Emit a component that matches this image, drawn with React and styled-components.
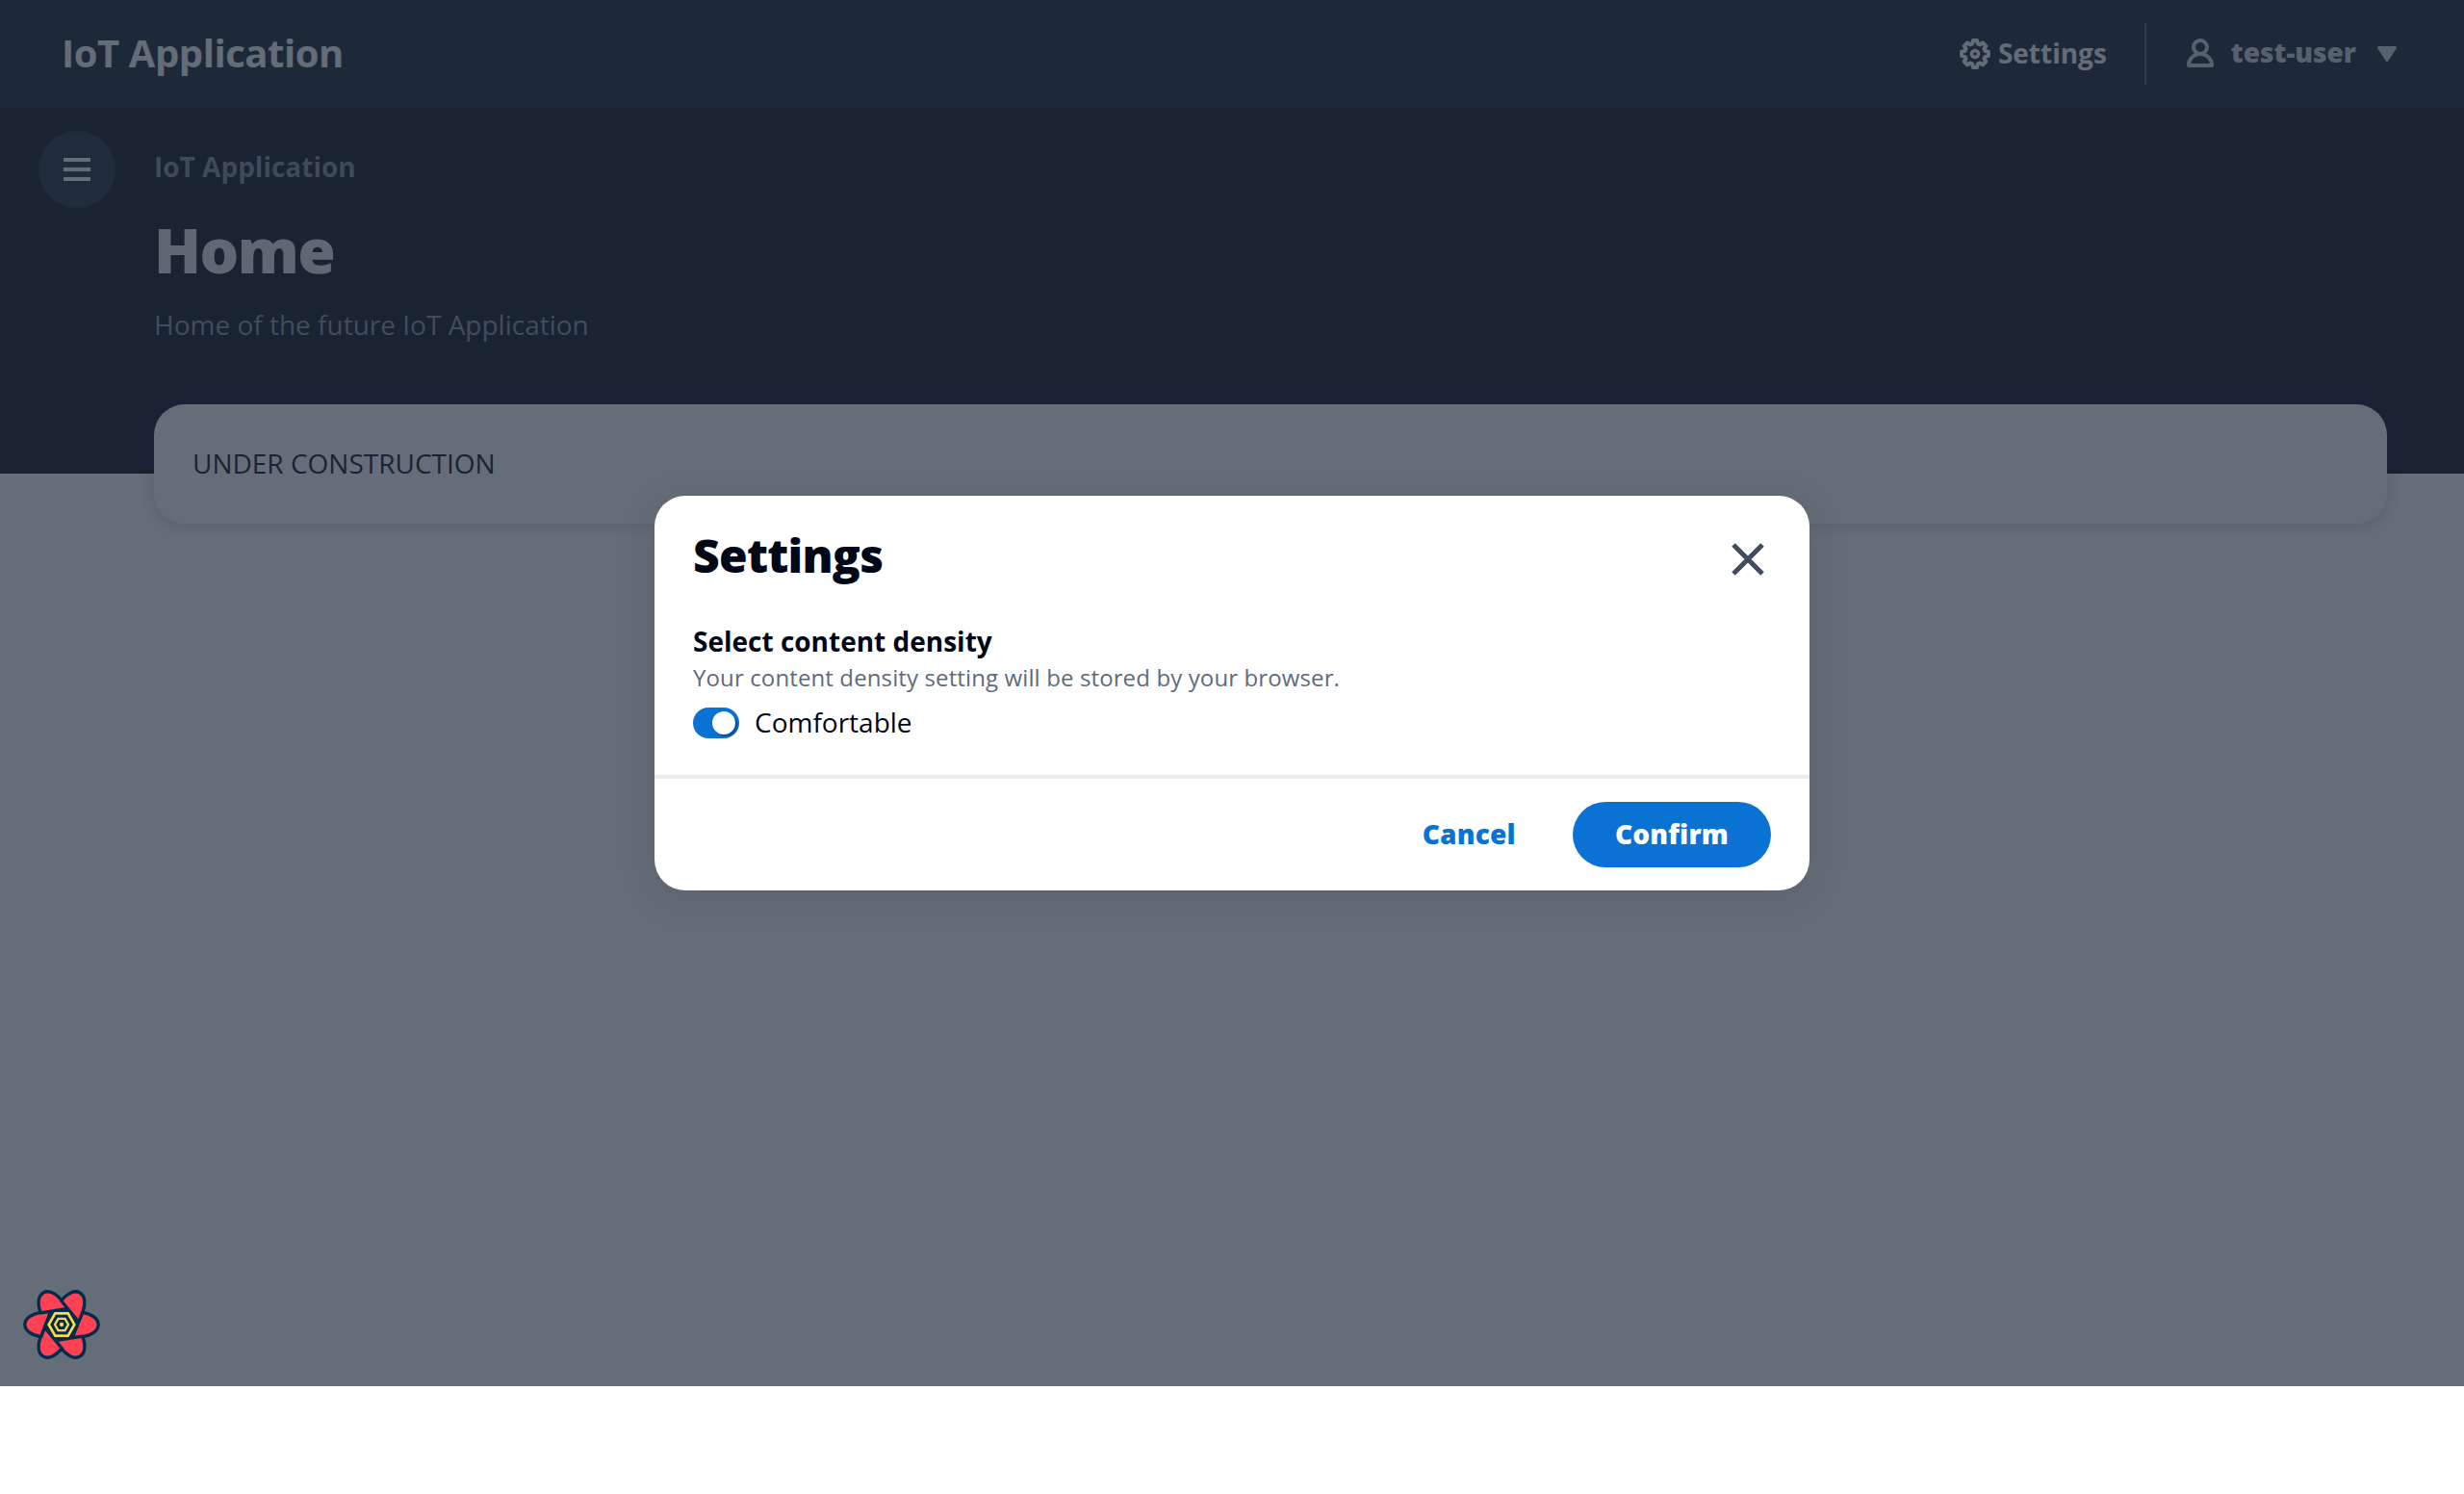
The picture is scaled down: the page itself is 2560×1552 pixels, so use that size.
import React from "react";
import styled, { createGlobalStyle } from "styled-components";

const GlobalStyle = createGlobalStyle`
  * { box-sizing: border-box; }
  body {
    margin: 0;
    background: #ffffff;
    color: #000716;
    font-family: "Open Sans", "Noto Sans", sans-serif;
    font-size: 28px;
    line-height: 40px;
  }
  h1, h2, p { margin: 0; }
  button { font: inherit; border: 0; background: none; padding: 0; cursor: pointer; }
`;

const Page = styled.div`
  position: relative;
  height: 1440px;
  background: #ffffff;
`;

const TopBar = styled.header`
  display: flex;
  align-items: center;
  justify-content: space-between;
  height: 112px;
  padding: 0 69px 0 64px;
  background: #0f1b2a;
`;

const Brand = styled.span`
  padding-bottom: 3px;
  font-size: 40px;
  line-height: 48px;
  font-weight: 700;
  letter-spacing: -0.45px;
  color: #fbfbfb;
`;

const Utilities = styled.nav`
  display: flex;
  align-items: center;
  height: 64px;
`;

const Utility = styled.button`
  display: flex;
  align-items: center;
  gap: ${(p) => p.$gap}px;
  font-weight: ${(p) => p.$weight};
  color: ${(p) => p.$color};
  svg { display: block; }
`;

const UtilityLabel = styled.span`
  padding-bottom: ${(p) => p.$lift}px;
`;

const UtilityDivider = styled.span`
  width: 2px;
  height: 64px;
  margin: 0 40px 0 39px;
  background: #414d5c;
`;

const Caret = styled.svg`
  margin-left: 5px;
`;

const Hero = styled.section`
  display: flex;
  align-items: flex-start;
  height: 380px;
  padding: 24px 80px 0 40px;
  background: #000716;
`;

const MenuButton = styled.button`
  display: flex;
  flex-direction: column;
  align-items: center;
  justify-content: center;
  gap: 6px;
  width: 80px;
  height: 80px;
  margin-right: 40px;
  border-radius: 50%;
  background: #192534;
`;

const MenuBar = styled.span`
  width: 28px;
  height: 4px;
  background: #fbfbfb;
`;

const HeroText = styled.div`
  display: flex;
  flex-direction: column;
  padding-top: 17px;
`;

const Breadcrumb = styled.span`
  font-weight: 700;
  color: #7d8998;
`;

const PageTitle = styled.h1`
  margin-top: 27px;
  font-size: 64px;
  line-height: 80px;
  font-weight: 800;
  letter-spacing: -1.5px;
  color: #e9ebed;
`;

const PageDescription = styled.p`
  margin-top: 17px;
  color: #8793a2;
`;

const Card = styled.section`
  position: relative;
  display: flex;
  align-items: center;
  height: 124px;
  margin: -72px 80px 0 160px;
  padding: 0 40px 2px;
  border-radius: 32px;
  background: #ffffff;
  box-shadow: 0 2px 16px 4px rgba(0, 7, 22, 0.12);
`;

const Backdrop = styled.div`
  position: absolute;
  inset: 0;
  display: flex;
  align-items: center;
  justify-content: center;
  background: rgba(35, 47, 62, 0.7);
`;

const Dialog = styled.div`
  display: flex;
  flex-direction: column;
  width: 1200px;
  height: 410px;
  border-radius: 32px;
  background: #ffffff;
  box-shadow: 0 8px 40px 2px rgba(0, 7, 22, 0.1);
`;

const DialogHeader = styled.div`
  display: flex;
  align-items: flex-start;
  justify-content: space-between;
  padding: 32px 44px 0 40px;
`;

const DialogTitle = styled.h2`
  font-size: 48px;
  line-height: 60px;
  font-weight: 800;
  letter-spacing: -0.75px;
`;

const CloseButton = styled.button`
  display: flex;
  margin-top: 14px;
  svg { display: block; }
`;

const DialogBody = styled.div`
  flex: 1;
  padding: 39px 40px 0;
`;

const FieldLabel = styled.div`
  font-weight: 700;
`;

const FieldHint = styled.div`
  font-size: 24px;
  line-height: 36px;
  letter-spacing: 0.12px;
  color: #5f6b7a;
`;

const ToggleRow = styled.label`
  display: flex;
  align-items: center;
  gap: 16px;
  height: 40px;
  margin-top: 9px;
`;

const ToggleTrack = styled.span`
  display: flex;
  align-items: center;
  justify-content: flex-end;
  width: 48px;
  height: 32px;
  padding: 4px;
  border-radius: 16px;
  background: #0972d3;
`;

const ToggleKnob = styled.span`
  width: 24px;
  height: 24px;
  border-radius: 50%;
  background: #ffffff;
  box-shadow: 2px 2px 2px rgba(0, 7, 22, 0.35);
`;

const ToggleLabel = styled.span`
  padding-bottom: 2px;
`;

const DialogFooter = styled.div`
  display: flex;
  align-items: center;
  justify-content: flex-end;
  gap: 15px;
  height: 120px;
  padding: 0 40px;
  border-top: 4px solid #e9ebed;
`;

const Button = styled.button`
  height: 68px;
  padding: 0 44px 2px;
  border-radius: 40px;
  font-weight: 800;
  letter-spacing: 0.22px;
  color: ${(p) => (p.$primary ? "#ffffff" : "#0972d3")};
  background: ${(p) => (p.$primary ? "#0972d3" : "transparent")};
`;

const QueryBadge = styled.button`
  position: absolute;
  left: 24px;
  bottom: 24px;
  width: 80px;
  height: 80px;
  svg { display: block; }
`;

const GearIcon = () => (
  <svg width="32" height="32" viewBox="0 0 16 16" fill="none" stroke="currentColor" strokeWidth="1.950">
    <path
      strokeLinejoin="round"
      d="M6.9 1h2.2l.3 1.7 1.2.5 1.4-1 1.7 1.7-1 1.4.5 1.2 1.7.3v2.3l-1.7.3-.5 1.2 1 1.4-1.7 1.7-1.4-1-1.2.5-.3 1.8H6.9l-.3-1.8-1.2-.5-1.4 1L2.300 12l1-1.400-.5-1.200-1.800-.3V6.800l1.800-.3.5-1.200-1-1.400L4 2.200l1.400 1 1.200-.5z"
    />
    <circle cx="8" cy="8" r="1.750" strokeWidth="1.800" />
  </svg>
);

const UserIcon = () => (
  <svg width="32" height="32" viewBox="0 0 16 16" fill="none" stroke="currentColor" strokeWidth="2" strokeLinejoin="round">
    <circle cx="8" cy="4.500" r="3.500" />
    <path d="M8 8c-3.300 0-6 2.500-6 6h12c0-3.500-2.700-6-6-6z" />
  </svg>
);

const petals = [0, 60, 120, 180, 240, 300];

const hexagon = (r) =>
  petals
    .map((a) => {
      const t = (a * Math.PI) / 180;
      return `${(r * Math.cos(t)).toFixed(2)},${(r * Math.sin(t)).toFixed(2)}`;
    })
    .join(" ");

const QueryLogo = () => (
  <svg width="80" height="80" viewBox="-120 -120 240 240">
    <circle r="54" fill="#002c4b" />
    <g fill="#ff4154" stroke="#002c4b" strokeWidth="10" strokeLinejoin="round">
      {petals.map((a) => (
        <path key={a} transform={`rotate(${a})`} d="M64-38C93-34 114.500-19 114.500 0C114.500 20 92 34 62 38C52 40 42 41 34 41Z" />
      ))}
    </g>
    <polygon points={hexagon(40)} fill="#002c4b" stroke="#ffd94c" strokeWidth="8" />
    <polygon points={hexagon(21)} fill="none" stroke="#ffd94c" strokeWidth="7" />
    <circle r="6.500" fill="#ffd94c" />
  </svg>
);

export default function App() {
  return (
    <>
      <GlobalStyle />
      <Page>
        <TopBar>
          <Brand>IoT Application</Brand>
          <Utilities>
            <Utility $gap={8} $weight={700} $color="#fbfbfb">
              <GearIcon />
              <UtilityLabel $lift={2}>Settings</UtilityLabel>
            </Utility>
            <UtilityDivider />
            <Utility $gap={16} $weight={800} $color="#d1d5db">
              <UserIcon />
              <UtilityLabel $lift={4}>test-user</UtilityLabel>
              <Caret width="22" height="18" viewBox="0 0 22 18" fill="currentColor" stroke="currentColor" strokeWidth="3" strokeLinejoin="round">
                <path d="M2.500 2.500h17L11 15.500z" />
              </Caret>
            </Utility>
          </Utilities>
        </TopBar>
        <Hero>
          <MenuButton aria-label="Open navigation">
            <MenuBar />
            <MenuBar />
            <MenuBar />
          </MenuButton>
          <HeroText>
            <Breadcrumb>IoT Application</Breadcrumb>
            <PageTitle>Home</PageTitle>
            <PageDescription>Home of the future IoT Application</PageDescription>
          </HeroText>
        </Hero>
        <Card>UNDER CONSTRUCTION</Card>
        <Backdrop>
          <Dialog role="dialog">
            <DialogHeader>
              <DialogTitle>Settings</DialogTitle>
              <CloseButton aria-label="Close">
                <svg width="40" height="40" viewBox="0 0 40 40" stroke="#414d5c" strokeWidth="5">
                  <path d="M5 5l30 30M35 5L5 35" />
                </svg>
              </CloseButton>
            </DialogHeader>
            <DialogBody>
              <FieldLabel>Select content density</FieldLabel>
              <FieldHint>Your content density setting will be stored by your browser.</FieldHint>
              <ToggleRow>
                <ToggleTrack>
                  <ToggleKnob />
                </ToggleTrack>
                <ToggleLabel>Comfortable</ToggleLabel>
              </ToggleRow>
            </DialogBody>
            <DialogFooter>
              <Button>Cancel</Button>
              <Button $primary>Confirm</Button>
            </DialogFooter>
          </Dialog>
        </Backdrop>
        <QueryBadge aria-label="Open query devtools">
          <QueryLogo />
        </QueryBadge>
      </Page>
    </>
  );
}
